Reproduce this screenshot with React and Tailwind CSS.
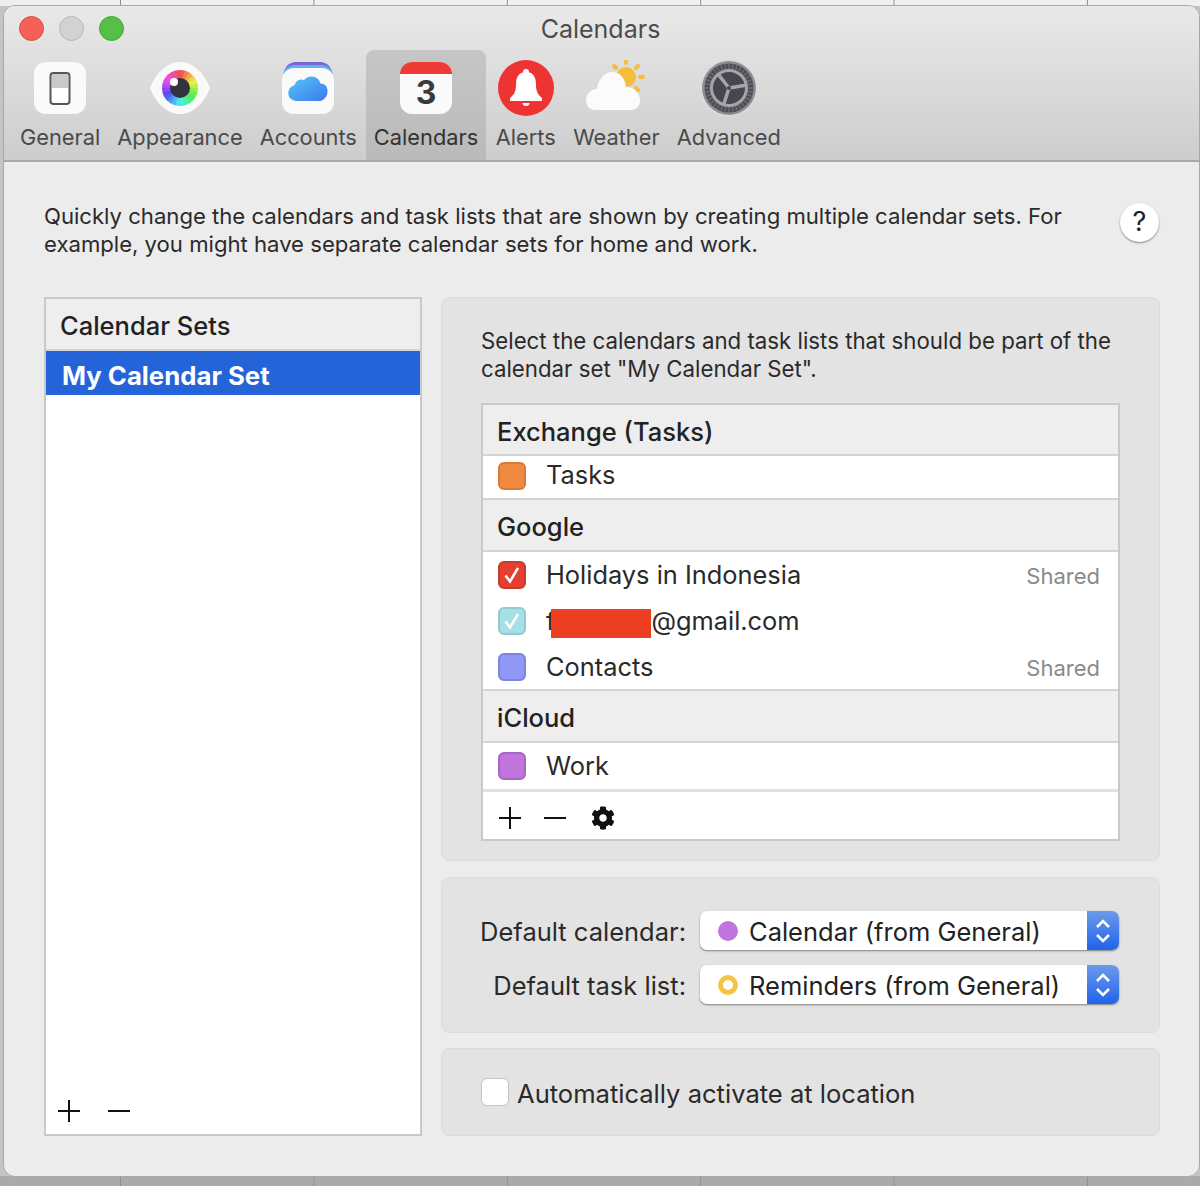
import { FaCog } from "react-icons/fa";

function GeneralIcon() {
  return (
    <svg width="52" height="52" viewBox="0 0 52 52">
      <rect x="0" y="0" width="52" height="52" rx="12" fill="#fafafa" />
      <rect x="16.5" y="11" width="19" height="31" rx="3" fill="#fff" stroke="#55565a" strokeWidth="2" />
      <path d="M18 14a2 2 0 0 1 2-2h12a2 2 0 0 1 2 2v12H18z" fill="#c9c9cb" />
    </svg>
  );
}

function AppearanceIcon() {
  const steps = Array.from({ length: 24 }, (_, i) => i);
  const r = 13.5;
  return (
    <svg width="60" height="52" viewBox="0 0 60 52">
      <path d="M0 26C6 10 18 0 30 0s24 10 30 26C54 42 42 52 30 52S6 42 0 26z" fill="#fafafa" />
      {steps.map((i) => {
        const a0 = ((i * 15 - 90) * Math.PI) / 180;
        const a1 = (((i + 1) * 15 - 88) * Math.PI) / 180;
        return (
          <path
            key={i}
            d={`M${30 + r * Math.cos(a0)} ${26 + r * Math.sin(a0)}A${r} ${r} 0 0 1 ${30 + r * Math.cos(a1)} ${26 + r * Math.sin(a1)}`}
            fill="none"
            stroke={`hsl(${i * 15 + 5} 85% 62%)`}
            strokeWidth="9"
          />
        );
      })}
      <circle cx="30" cy="26" r="10" fill="#33343c" />
      <circle cx="24" cy="20" r="4" fill="#fff" />
    </svg>
  );
}

function AccountsIcon() {
  return (
    <svg width="52" height="52" viewBox="0 0 52 52">
      <defs>
        <linearGradient id="cloud" x1="0" y1="0" x2="1" y2="1">
          <stop offset="0" stopColor="#56c8f5" />
          <stop offset="1" stopColor="#3b78f0" />
        </linearGradient>
      </defs>
      <path d="M2 12C2 5 7 0 14 0h24c7 0 12 5 12 12z" fill="#7a62d8" />
      <path d="M1 14C1 7 6 3 13 3h26c7 0 12 4 12 11z" fill="#5cb4f2" />
      <rect x="0" y="6" width="52" height="46" rx="12" fill="#fafafa" />
      <path d="M14 39a8 8 0 0 1-1.500-15.800 7 7 0 0 1 9.500-5.200 9.500 9.500 0 0 1 16.500 3.500 6.500 6.500 0 0 1 7 6.500A10 10 0 0 1 38 39z" fill="url(#cloud)" />
    </svg>
  );
}

function CalendarIcon() {
  return (
    <div className="flex h-[52px] w-[52px] flex-col overflow-hidden rounded-[12px] bg-[#fafafa]">
      <div className="h-[12px] shrink-0 bg-[#ee3b36]" />
      <div className="flex flex-1 items-center justify-center pb-[3px] text-[32px] leading-none font-bold text-[#3a3a3c]">3</div>
    </div>
  );
}

function AlertsIcon() {
  return (
    <svg width="56" height="56" viewBox="0 0 56 56">
      <circle cx="28" cy="28" r="28" fill="#ee3333" />
      <circle cx="28" cy="12" r="3" fill="#fff" />
      <path d="M28 12c-8 0-10 6-10 13 0 6-2 10-6 13v3h32v-3c-4-3-6-7-6-13 0-7-2-13-10-13z" fill="#fff" />
      <path d="M24.500 43h7a3.500 3 0 0 1-7 0z" fill="#fff" />
    </svg>
  );
}

function WeatherIcon() {
  const rays = [[41, 0, 41, 3], [29, 6, 31, 8], [53, 6, 51, 8], [58, 17, 55, 17], [53, 30, 51, 28]];
  return (
    <svg width="62" height="56" viewBox="0 0 62 56">
      {rays.map((p) => (
        <line key={p[1] + p[0]} x1={p[0]} y1={p[1]} x2={p[2]} y2={p[3]} stroke="#f4bd3c" strokeWidth="4" strokeLinecap="round" />
      ))}
      <circle cx="41" cy="17" r="10" fill="#f4bd3c" />
      <path d="M11 50C4 50 1 45 1 40c0-6 5-11 11-11 1-9 7-17 15-17 8 0 13 6 14 15 8 0 14 6 14 14 0 6-5 9-9 9z" fill="#fbfbfb" />
    </svg>
  );
}

function AdvancedIcon() {
  const teeth = Array.from({ length: 36 }, (_, i) => i * 10);
  return (
    <svg width="58" height="58" viewBox="0 0 58 58">
      <circle cx="29" cy="29" r="28.500" fill="#dcdcde" />
      <circle cx="29" cy="29" r="27" fill="#8e8e94" />
      <circle cx="29" cy="29" r="24.500" fill="#4c4d54" />
      {teeth.map((d) => (
        <line key={d} x1="29" y1="5" x2="29" y2="10" stroke="#6a6a70" strokeWidth="1.500" transform={`rotate(${d} 29 29)`} />
      ))}
      <circle cx="29" cy="29" r="17.500" fill="#46464e" stroke="#a4a4aa" strokeWidth="3" />
      <g stroke="#a4a4aa" strokeWidth="3.500" strokeLinecap="round">
        <line x1="29" y1="29" x2="18.400" y2="15.600" />
        <line x1="29" y1="29" x2="45.700" y2="26.200" />
        <line x1="29" y1="29" x2="23.800" y2="45.300" />
      </g>
      <circle cx="29" cy="29" r="2" fill="#46464e" />
    </svg>
  );
}

const tabs = [
  { label: "General", icon: <GeneralIcon /> },
  { label: "Appearance", icon: <AppearanceIcon /> },
  { label: "Accounts", icon: <AccountsIcon /> },
  { label: "Calendars", icon: <CalendarIcon />, active: true },
  { label: "Alerts", icon: <AlertsIcon />, width: "w-[77px]" },
  { label: "Weather", icon: <WeatherIcon /> },
  { label: "Advanced", icon: <AdvancedIcon /> },
];

function Plus() {
  return (
    <svg width="24" height="24" viewBox="0 0 24 24" stroke="#111" strokeWidth="2">
      <path d="M12 1v22M1 12h22" />
    </svg>
  );
}

function Minus() {
  return (
    <svg width="24" height="24" viewBox="0 0 24 24" stroke="#111" strokeWidth="2">
      <path d="M1 12h22" />
    </svg>
  );
}

function Check({ color }) {
  return (
    <svg width="20" height="20" viewBox="0 0 20 20" fill="none" stroke={color} strokeWidth="2.500">
      <path d="M3.500 10.500l4.500 6L16 3" />
    </svg>
  );
}

function Swatch({ bg, border, checked }) {
  return (
    <span className={`flex h-[28px] w-[28px] shrink-0 items-center justify-center rounded-[6px] border-2 ${bg} ${border}`}>
      {checked && <Check color="#fff" />}
    </span>
  );
}

function SectionHeader({ className, children }) {
  return (
    <div className={`flex shrink-0 items-center border-b-2 border-[#d4d4d4] bg-[#eeeeee] pt-[5px] pl-[14px] text-[25.500px] font-medium text-[#222] ${className}`}>
      {children}
    </div>
  );
}

function CalRow({ swatch, note, className, children }) {
  return (
    <div className={`flex shrink-0 items-center bg-white pr-[18px] pl-[15px] ${className}`}>
      {swatch}
      <div className="ml-[20px] flex flex-1 items-center text-[25.400px] text-[#2a2a2a]">{children}</div>
      {note && <span className="pt-[2px] text-[22px] text-[#8a8a8a]">{note}</span>}
    </div>
  );
}

function SelectBox({ dot, children }) {
  return (
    <div className="flex h-[39px] w-[419px] shrink-0 overflow-hidden rounded-[7px] bg-white shadow-[0_1px_2px_rgba(0,0,0,0.45)]">
      <div className="flex flex-1 items-center gap-[11px] pl-[18px] text-[25.500px] leading-none text-[#222]">
        {dot}
        <span className="pt-[2px]">{children}</span>
      </div>
      <div className="flex w-[32px] items-center justify-center bg-gradient-to-b from-[#6c9aea] to-[#1f62ea]">
        <svg width="18" height="28" viewBox="0 0 18 28" fill="none" stroke="#fff" strokeWidth="2.500">
          <path d="M3 10l6-6 6 6M3 18l6 6 6-6" />
        </svg>
      </div>
    </div>
  );
}

const panel = "rounded-[8px] border border-[#dcdcdc] bg-[#e3e3e3]";

export default function App() {
  return (
    <div
      className="h-[1186px] w-[1200px] overflow-hidden bg-[#aaaaaa] bg-[linear-gradient(90deg,#8e8e8e_1px,transparent_1px),linear-gradient(180deg,#efefef_0,#efefef_6px,#c4c4c4_6px,#c4c4c4_1176px,#aaaaaa_1176px)] bg-[size:193.4px_100%,100%_100%] bg-[position:120px_0,0_0] pt-[5px] pb-[9px] pl-[3px] font-['Inter','Noto_Sans',sans-serif]"
    >
      <div className="flex h-full flex-col overflow-hidden rounded-t-[12px] rounded-b-[12px] border border-[#a8a8a8] bg-[#ececec]">
        <div className="flex h-[156px] shrink-0 flex-col border-b-2 border-[#a9a9a9] bg-gradient-to-b from-[#e9e9e9] to-[#cdcdcd]">
          <div className="flex h-[44px] shrink-0 items-center pl-[15px]">
            <div className="flex gap-[15px]">
              <span className="h-[25px] w-[25px] rounded-full border border-[#dd4a44] bg-[#f4605a]" />
              <span className="h-[25px] w-[25px] rounded-full border border-[#b8b8b8] bg-[#d2d2d2]" />
              <span className="h-[25px] w-[25px] rounded-full border border-[#40a53c] bg-[#54c047]" />
            </div>
            <div className="flex-1 pt-[3px] pr-[122px] text-center text-[25px] text-[#4c4c4c]">Calendars</div>
          </div>
          <div className="flex flex-1 pl-[8px]">
            {tabs.map((t) => (
              <div
                key={t.label}
                className={`mr-px flex flex-col items-center rounded-t-[8px] px-[8px] pt-[8px] ${t.width || ""} ${t.active ? "bg-gradient-to-b from-[#c6c6c6] to-[#bababa] text-[#333]" : "text-[#4a4a4a]"}`}
              >
                <div className="flex h-[60px] items-center justify-center">{t.icon}</div>
                <div className="mt-[5px] text-[21.800px] leading-[28px] whitespace-nowrap">{t.label}</div>
              </div>
            ))}
          </div>
        </div>

        <div className="flex flex-1 flex-col pt-[40px] pr-[39px] pb-[40px] pl-[40px]">
          <div className="flex h-[95px] shrink-0 items-start justify-between">
            <p className="w-[1030px] text-[22.120px] leading-[28px] text-[#2a2a2a]">
              Quickly change the calendars and task lists that are shown by creating multiple calendar sets. For example, you might have separate calendar sets for home and work.
            </p>
            <div className="mt-[1px] mr-px flex h-[39px] w-[39px] items-center justify-center rounded-full bg-white text-[27px] text-[#222] shadow-[0_1px_2px_rgba(0,0,0,0.45)]">
              ?
            </div>
          </div>

          <div className="flex flex-1 gap-[19px]">
            <div className="flex w-[378px] shrink-0 flex-col border-2 border-[#c9c9c9] bg-white">
              <SectionHeader className="h-[52px]">Calendar Sets</SectionHeader>
              <div className="flex h-[44px] items-center bg-[#2563d9] pt-[6px] pl-[16px] text-[25.750px] font-bold text-white">My Calendar Set</div>
              <div className="flex-1" />
              <div className="flex h-[48px] items-center gap-[26px] pt-[2px] pl-[11px]">
                <Plus />
                <Minus />
              </div>
            </div>

            <div className="flex w-[719px] flex-col gap-[16px]">
              <div className={`${panel} h-[564px] shrink-0 px-[39px] pt-[29px]`}>
                <p className="text-[22.250px] leading-[28px] text-[#2a2a2a]">
                  Select the calendars and task lists that should be part of the calendar set "My Calendar Set".
                </p>
                <div className="mt-[20px] flex h-[438px] flex-col border-2 border-[#c9c9c9] bg-white">
                  <SectionHeader className="h-[51px]">Exchange (Tasks)</SectionHeader>
                  <CalRow className="h-[44px] border-b-2 border-[#d4d4d4] pb-[3px]" swatch={<Swatch bg="bg-[#f08a42]" border="border-[#dc7a35]" />}>
                    Tasks
                  </CalRow>
                  <SectionHeader className="h-[52px]">Google</SectionHeader>
                  <CalRow className="h-[46px]" note="Shared" swatch={<Swatch checked bg="bg-[#e5402f]" border="border-[#c93a2c]" />}>
                    Holidays in Indonesia
                  </CalRow>
                  <CalRow className="h-[46px]" swatch={<Swatch checked bg="bg-[#a6dfe6]" border="border-[#93c9d0]" />}>
                    <span>f</span>
                    <span className="mt-[6px] -ml-[4px] h-[29px] w-[100px] bg-[#ee3e22]" />
                    @gmail.com
                  </CalRow>
                  <CalRow className="h-[47px] border-b-2 border-[#d4d4d4] pt-px" note="Shared" swatch={<Swatch bg="bg-[#9097f6]" border="border-[#7e85de]" />}>
                    Contacts
                  </CalRow>
                  <SectionHeader className="h-[52px]">iCloud</SectionHeader>
                  <CalRow className="h-[49px] border-b-[3px] border-[#e0e0e0]" swatch={<Swatch bg="bg-[#c074dc]" border="border-[#a865c4]" />}>
                    Work
                  </CalRow>
                  <div className="flex flex-1 items-center gap-[21px] pt-[5px] pl-[15px] text-[#111]">
                    <Plus />
                    <Minus />
                    <FaCog size={24} className="ml-[3px] text-[#111]" />
                  </div>
                </div>
              </div>

              <div className={`${panel} flex h-[156px] shrink-0 flex-col gap-[15px] pt-[33px]`}>
                <div className="flex h-[39px] items-center justify-end pr-[40px] text-[25.500px] leading-none text-[#2a2a2a]">
                  <span className="mr-[14px] pt-[2px] whitespace-nowrap">Default calendar:</span>
                  <SelectBox dot={<span className="h-[20px] w-[20px] rounded-full bg-[#c074dc]" />}>Calendar (from General)</SelectBox>
                </div>
                <div className="flex h-[39px] items-center justify-end pr-[40px] text-[25.500px] leading-none text-[#2a2a2a]">
                  <span className="mr-[14px] pt-[2px] whitespace-nowrap">Default task list:</span>
                  <SelectBox dot={<span className="h-[20px] w-[20px] rounded-full border-[5px] border-[#f5c443] bg-white" />}>Reminders (from General)</SelectBox>
                </div>
              </div>

              <div className={`${panel} -mt-px flex flex-1 items-center gap-[8px] pl-[39px]`}>
                <span className="h-[28px] w-[28px] rounded-[6px] border border-[#c4c4c4] bg-white" />
                <span className="pt-[5px] text-[25.550px] text-[#2a2a2a]">Automatically activate at location</span>
              </div>
            </div>
          </div>
        </div>
      </div>
    </div>
  );
}
